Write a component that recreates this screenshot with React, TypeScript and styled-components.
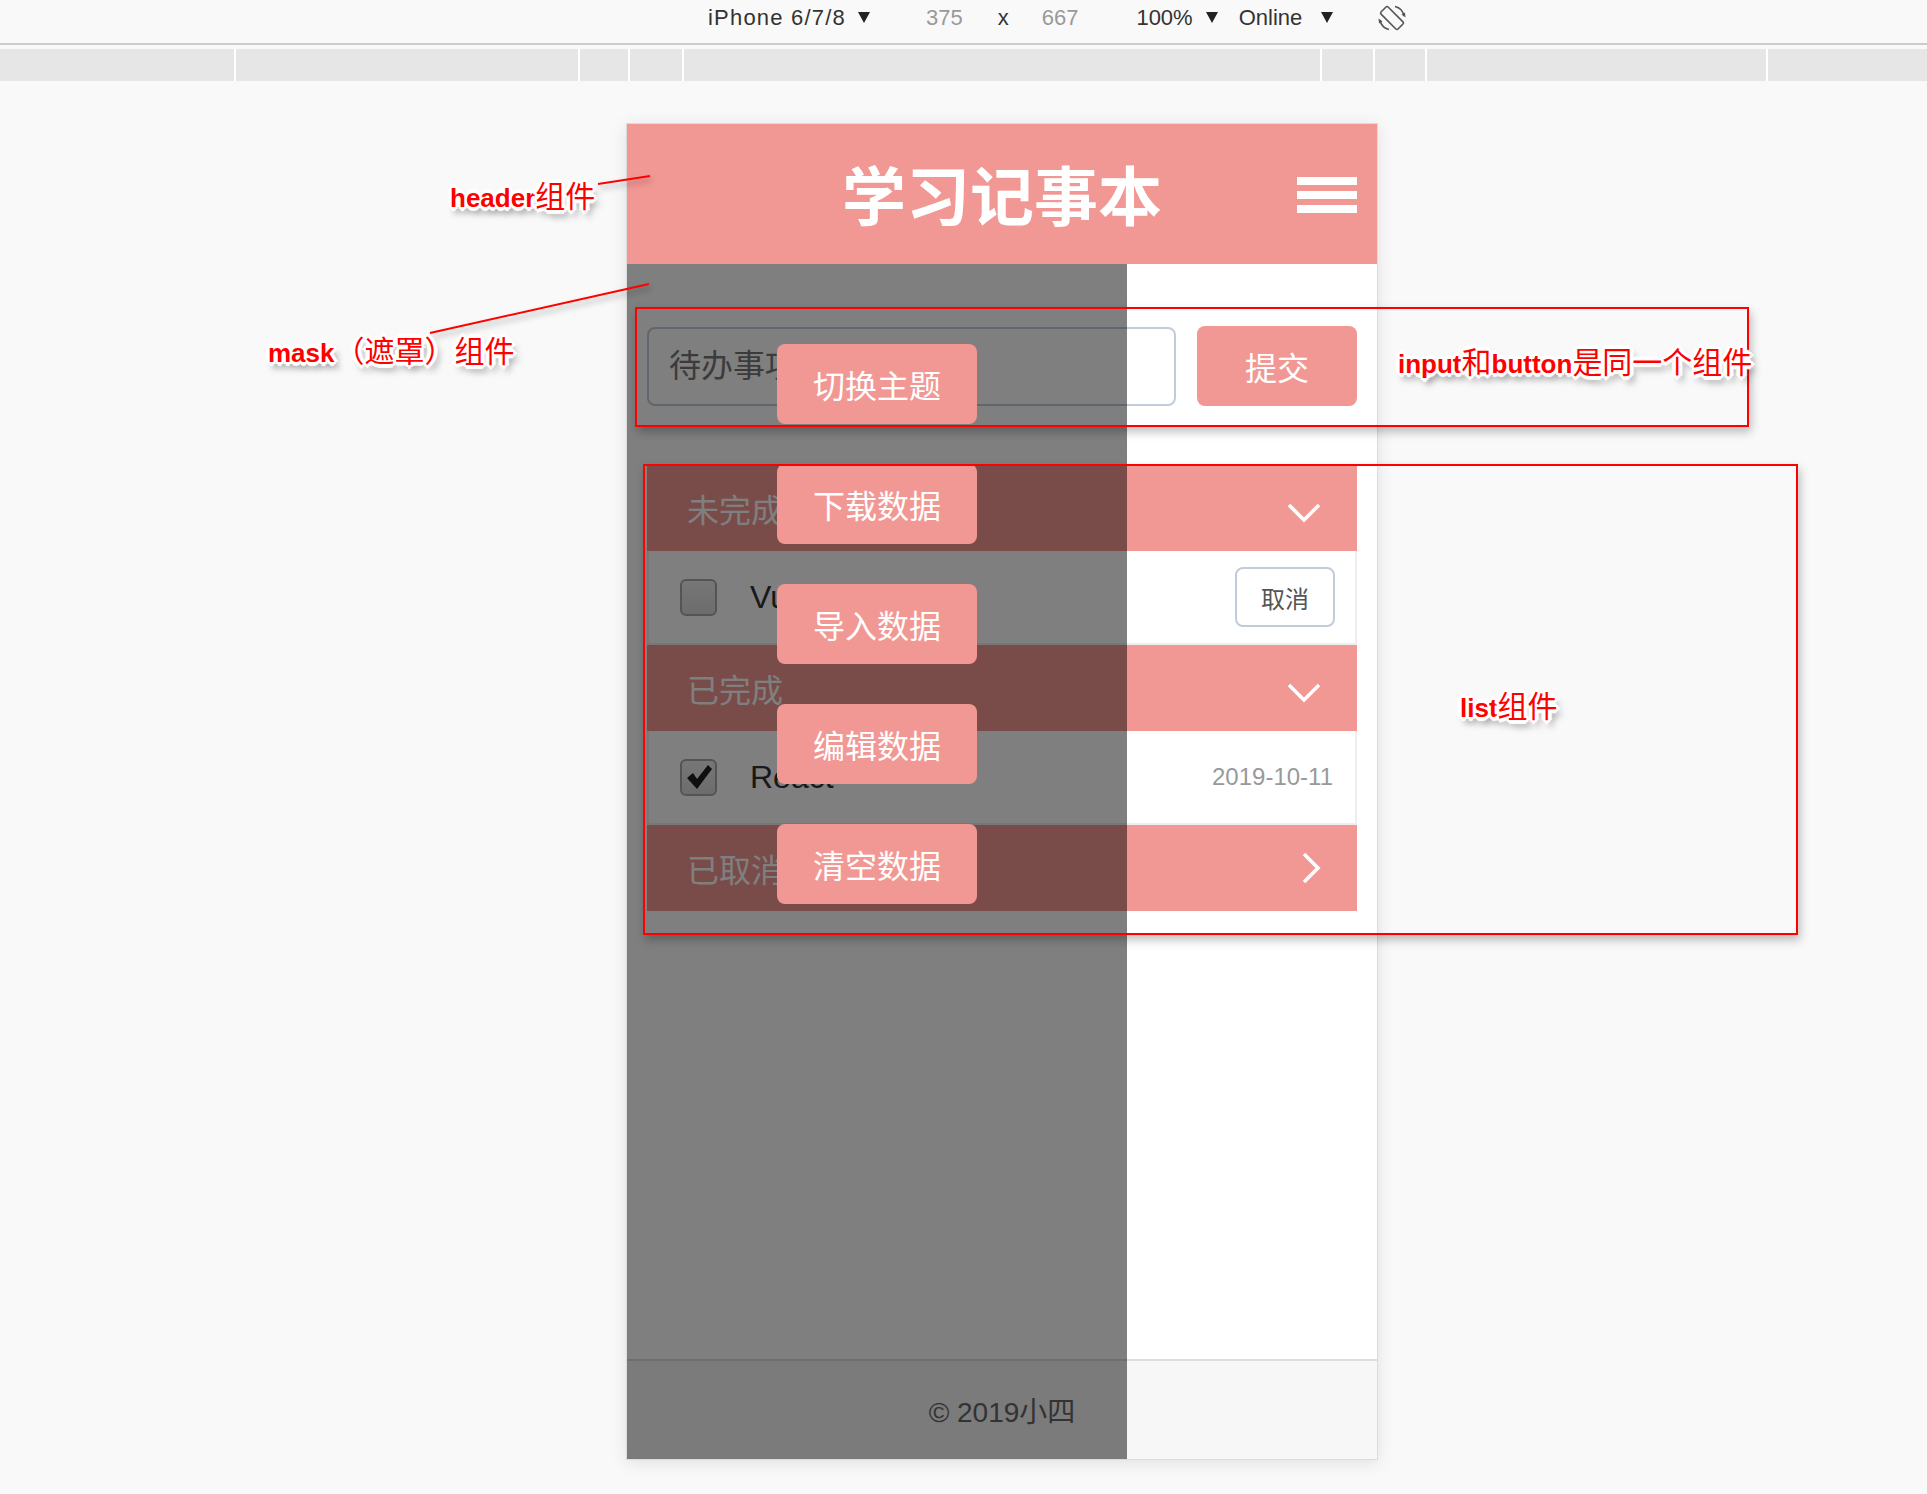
import React from "react";
import styled, { createGlobalStyle } from "styled-components";

const PINK = "#f29894";

const Global = createGlobalStyle`
  html, body { margin: 0; padding: 0; background: #f9f9f9; }
  body { font-family: "Liberation Sans", "Noto Sans CJK SC", sans-serif; }
  * { box-sizing: border-box; }
`;

const Page = styled.div`
  position: relative;
  width: 1927px;
  height: 1494px;
  background: #f9f9f9;
  overflow: hidden;
`;

/* ---------- devtools toolbar ---------- */
const Toolbar = styled.div`
  height: 45px;
  padding: 0 0 8px 708px;
  display: flex;
  align-items: center;
  font-family: "Liberation Sans", sans-serif;
  font-size: 22px;
  color: #333;
  border-bottom: 2px solid #cbcbcb;
`;

const ToolItem = styled.span<{ $ml: number; $muted?: boolean; $wide?: boolean }>`
  display: inline-flex;
  align-items: center;
  margin-left: ${(p) => p.$ml}px;
  color: ${(p) => (p.$muted ? "#999" : "#333")};
  letter-spacing: ${(p) => (p.$wide ? "1.2px" : "0")};
  white-space: nowrap;
`;

const MediaBar = styled.div`
  margin-top: 4px;
  height: 32px;
  display: flex;
  background: #e6e6e6;
`;

const MediaSeg = styled.div<{ $w?: number; $first?: boolean }>`
  flex: ${(p) => (p.$w ? `0 0 ${p.$w}px` : "1 1 auto")};
  border-left: ${(p) => (p.$first ? "none" : "2px solid #fff")};
`;

/* ---------- phone ---------- */
const Stage = styled.div`
  padding: 42px 0 0 626px;
`;

const Phone = styled.div`
  position: relative;
  width: 752px;
  height: 1337px;
  border: 1px solid #dcdcdc;
  background: #fff;
  display: flex;
  flex-direction: column;
  box-shadow: 0 3px 16px rgba(0, 0, 0, 0.1);
  font-family: "Liberation Sans", "Noto Sans CJK SC", sans-serif;
`;

const Header = styled.header`
  flex: 0 0 140px;
  background: ${PINK};
  display: grid;
  grid-template-columns: 1fr auto 1fr;
  align-items: center;
  padding: 0 20px;
`;

const Title = styled.h1`
  grid-column: 2;
  margin: 0 0 4px;
  font-family: "Noto Sans CJK SC", sans-serif;
  font-size: 64px;
  font-weight: 700;
  line-height: 1;
  color: #fff;
`;

const Hamburger = styled.div`
  justify-self: end;
  display: flex;
  flex-direction: column;
  gap: 6px;
  margin-top: 2px;
`;

const HamBar = styled.span`
  display: block;
  width: 60px;
  height: 8px;
  background: #fff;
`;

const Content = styled.main`
  flex: 1 1 auto;
  padding: 62px 20px 0;
`;

const InputRow = styled.div`
  display: flex;
  align-items: center;
  gap: 21px;
`;

const TodoInput = styled.input`
  flex: 1 1 auto;
  height: 79px;
  border: 2px solid #c0ccda;
  border-radius: 8px;
  padding: 0 20px;
  font-family: "Liberation Sans", "Noto Sans CJK SC", sans-serif;
  font-size: 32px;
  color: #333;
  outline: none;
  &::placeholder {
    color: #777;
  }
`;

const SubmitButton = styled.button`
  flex: 0 0 160px;
  height: 80px;
  border: none;
  border-radius: 8px;
  background: ${PINK};
  color: #fff;
  font-family: "Noto Sans CJK SC", sans-serif;
  font-size: 32px;
`;

const List = styled.section`
  margin-top: 59px;
  display: flex;
  flex-direction: column;
`;

const SectionHeader = styled.div`
  height: 86px;
  background: ${PINK};
  display: flex;
  align-items: center;
  justify-content: space-between;
  padding: 0 36px 0 40px;
  color: #fff;
  font-family: "Noto Sans CJK SC", sans-serif;
  font-size: 32px;
`;

const ChevronSlot = styled.span<{ $down?: boolean }>`
  display: flex;
  margin-top: ${(p) => (p.$down ? "10px" : "0")};
`;

const ItemRow = styled.div`
  height: 94px;
  border: 2px solid #eee;
  border-top: none;
  background: #fff;
  display: flex;
  align-items: center;
  padding: 0 20px 0 31px;
`;

const CheckBox = styled.span`
  flex: 0 0 37px;
  height: 37px;
  border: 2px solid #a9a9a9;
  border-radius: 6px;
  background: linear-gradient(#eeeeee, #d9d9d9);
  display: flex;
  align-items: center;
  justify-content: center;
`;

const ItemLabel = styled.span`
  margin-left: 33px;
  font-family: "Liberation Sans", sans-serif;
  font-size: 32px;
  color: #333;
`;

const CancelButton = styled.button`
  margin-left: auto;
  width: 100px;
  height: 60px;
  border: 2px solid #c0ccda;
  border-radius: 8px;
  background: #fff;
  color: #555;
  font-family: "Noto Sans CJK SC", sans-serif;
  font-size: 24px;
`;

const DateText = styled.span`
  margin-left: auto;
  margin-right: 2px;
  font-family: "Liberation Sans", sans-serif;
  font-size: 24px;
  color: #999;
`;

const Footer = styled.footer`
  flex: 0 0 100px;
  border-top: 2px solid #ddd;
  background: #f7f7f7;
  display: flex;
  align-items: center;
  justify-content: center;
  font-size: 28px;
  color: #666;
`;

const Mask = styled.div`
  position: absolute;
  left: 0;
  top: 140px;
  bottom: 0;
  width: 500px;
  background: rgba(0, 0, 0, 0.5);
  display: flex;
  flex-direction: column;
  align-items: center;
  padding-top: 80px;
  gap: 40px;
  z-index: 2;
`;

const MenuButton = styled.button`
  width: 200px;
  height: 80px;
  border: none;
  border-radius: 8px;
  background: ${PINK};
  color: #fff;
  font-family: "Noto Sans CJK SC", sans-serif;
  font-size: 32px;
`;

/* ---------- annotations (overlay) ---------- */
const Annotations = styled.div`
  position: absolute;
  inset: 0;
  pointer-events: none;
  z-index: 10;
`;

const LineLayer = styled.svg`
  position: absolute;
  left: 0;
  top: 0;
`;

const AnnoBox = styled.div<{ $x: number; $y: number; $w: number; $h: number }>`
  position: absolute;
  left: ${(p) => p.$x}px;
  top: ${(p) => p.$y}px;
  width: ${(p) => p.$w}px;
  height: ${(p) => p.$h}px;
  border: 2px solid #f00;
  box-shadow: 2px 5px 9px rgba(0, 0, 0, 0.25);
`;

const AnnoLabel = styled.div<{ $x: number; $y: number }>`
  position: absolute;
  left: ${(p) => p.$x}px;
  top: ${(p) => p.$y}px;
  white-space: nowrap;
  line-height: 32px;
  color: #f00;
  text-shadow: -3px 0 0 #fff, 3px 0 0 #fff, 0 -3px 0 #fff, 0 3px 0 #fff,
    -2px -2px 0 #fff, 2px -2px 0 #fff, -2px 2px 0 #fff, 2px 2px 0 #fff,
    -4px 0 1px #fff, 4px 0 1px #fff, 0 -4px 1px #fff, 0 4px 1px #fff,
    4px 6px 7px rgba(0, 0, 0, 0.6);
`;

const Latin = styled.span`
  font-family: "Liberation Sans", sans-serif;
  font-weight: 700;
  font-size: 26px;
`;

const Han = styled.span`
  font-family: "Noto Sans CJK SC", sans-serif;
  font-weight: 400;
  font-size: 30px;
`;

/* ---------- icons ---------- */
const Caret = () => (
  <svg width="12" height="11" viewBox="0 0 12 11">
    <path d="M0 0 L12 0 L6 11 Z" fill="#222" />
  </svg>
);

const RotateIcon = () => (
  <svg width="28" height="30" viewBox="0 0 28 30">
    <g fill="none" stroke="#555" strokeWidth="1.6">
      <rect x="9" y="3" width="10" height="24" rx="1.5" transform="rotate(-45 14 15)" />
      <path d="M17 3.5 A12 12 0 0 1 26 13" />
      <path d="M11 26.5 A12 12 0 0 1 2 17" />
    </g>
    <path d="M23.5 11.5 L27.5 14.5 L27 9.5 Z" fill="#555" />
    <path d="M4.5 18.5 L0.5 15.5 L1 20.5 Z" fill="#555" />
  </svg>
);

const ChevronDown = () => (
  <svg width="34" height="20" viewBox="0 0 34 20">
    <polyline points="2,2 17,17 32,2" fill="none" stroke="#fff" strokeWidth="3.6" />
  </svg>
);

const ChevronRight = () => (
  <svg width="20" height="32" viewBox="0 0 20 32">
    <polyline points="3,2 17,16 3,30" fill="none" stroke="#fff" strokeWidth="3.6" />
  </svg>
);

const CheckMark = () => (
  <svg width="30" height="30" viewBox="0 0 30 30">
    <path d="M3 16 L9 11 L13 17 L24 3 L28 7 L13 27 Z" fill="#1e1e1e" />
  </svg>
);

const menuItems = ["切换主题", "下载数据", "导入数据", "编辑数据", "清空数据"];
const mediaSegs = [234, 344, 50, 54, 638, 53, 52, 341];

export default function App() {
  return (
    <Page>
      <Global />
      <Toolbar>
        <ToolItem $ml={0} $wide>
          iPhone 6/7/8
        </ToolItem>
        <ToolItem $ml={12}>
          <Caret />
        </ToolItem>
        <ToolItem $ml={56} $muted>
          375
        </ToolItem>
        <ToolItem $ml={35}>x</ToolItem>
        <ToolItem $ml={33} $muted>
          667
        </ToolItem>
        <ToolItem $ml={58}>100%</ToolItem>
        <ToolItem $ml={13}>
          <Caret />
        </ToolItem>
        <ToolItem $ml={21}>Online</ToolItem>
        <ToolItem $ml={19}>
          <Caret />
        </ToolItem>
        <ToolItem $ml={45}>
          <RotateIcon />
        </ToolItem>
      </Toolbar>
      <MediaBar>
        {mediaSegs.map((w, i) => (
          <MediaSeg key={i} $w={w} $first={i === 0} />
        ))}
        <MediaSeg />
      </MediaBar>

      <Stage>
        <Phone>
          <Header>
            <Title>学习记事本</Title>
            <Hamburger>
              <HamBar />
              <HamBar />
              <HamBar />
            </Hamburger>
          </Header>

          <Content>
            <InputRow>
              <TodoInput placeholder="待办事项" />
              <SubmitButton>提交</SubmitButton>
            </InputRow>

            <List>
              <SectionHeader>
                <span>未完成</span>
                <ChevronSlot $down>
                  <ChevronDown />
                </ChevronSlot>
              </SectionHeader>
              <ItemRow>
                <CheckBox />
                <ItemLabel>Vue</ItemLabel>
                <CancelButton>取消</CancelButton>
              </ItemRow>
              <SectionHeader>
                <span>已完成</span>
                <ChevronSlot $down>
                  <ChevronDown />
                </ChevronSlot>
              </SectionHeader>
              <ItemRow>
                <CheckBox>
                  <CheckMark />
                </CheckBox>
                <ItemLabel>React</ItemLabel>
                <DateText>2019-10-11</DateText>
              </ItemRow>
              <SectionHeader>
                <span>已取消</span>
                <ChevronSlot>
                  <ChevronRight />
                </ChevronSlot>
              </SectionHeader>
            </List>
          </Content>

          <Footer>© 2019小四</Footer>

          <Mask>
            {menuItems.map((m) => (
              <MenuButton key={m}>{m}</MenuButton>
            ))}
          </Mask>
        </Phone>
      </Stage>

      <Annotations>
        <LineLayer width="1927" height="1494" viewBox="0 0 1927 1494">
          <defs>
            <filter id="ls" x="-10%" y="-50%" width="120%" height="300%">
              <feDropShadow dx="2" dy="4" stdDeviation="3" floodColor="#000" floodOpacity="0.35" />
            </filter>
          </defs>
          <g stroke="#f00" strokeWidth="2" filter="url(#ls)">
            <line x1="598" y1="184" x2="650" y2="176" />
            <line x1="430" y1="333" x2="649" y2="284" />
          </g>
        </LineLayer>

        <AnnoBox $x={635} $y={307} $w={1114} $h={120} />
        <AnnoBox $x={643} $y={464} $w={1155} $h={471} />

        <AnnoLabel $x={450} $y={178}>
          <Latin>header</Latin>
          <Han>组件</Han>
        </AnnoLabel>
        <AnnoLabel $x={268} $y={333}>
          <Latin>mask</Latin>
          <Han>（遮罩）组件</Han>
        </AnnoLabel>
        <AnnoLabel $x={1398} $y={344}>
          <Latin>input</Latin>
          <Han>和</Han>
          <Latin>button</Latin>
          <Han>是同一个组件</Han>
        </AnnoLabel>
        <AnnoLabel $x={1460} $y={688}>
          <Latin>list</Latin>
          <Han>组件</Han>
        </AnnoLabel>
      </Annotations>
    </Page>
  );
}
